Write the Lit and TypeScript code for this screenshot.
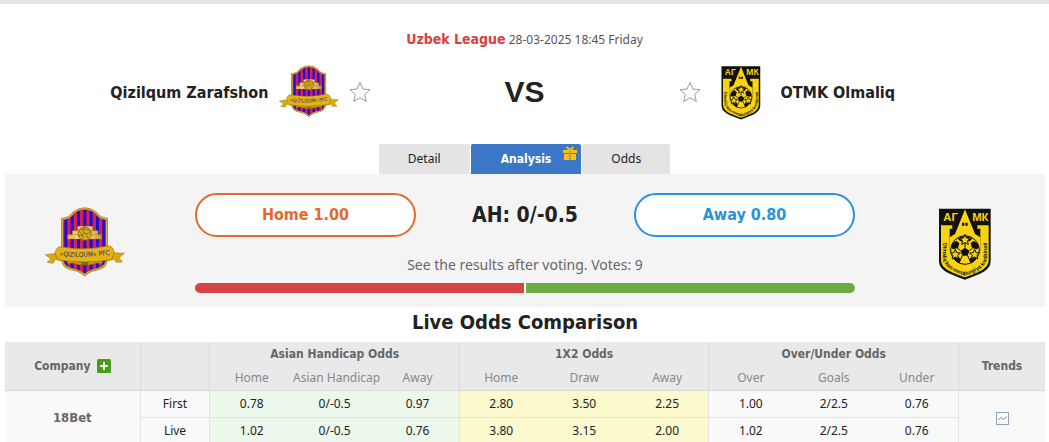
import { LitElement, html, svg, css } from "lit";
import { customElement, property } from "lit/decorators.js";
import { classMap } from "lit/directives/class-map.js";

type OddsRow = { label: string; ah: string[]; x12: string[]; ou: string[] };

const ODDS: { company: string; rows: OddsRow[] }[] = [
  {
    company: "18Bet",
    rows: [
      { label: "First", ah: ["0.78", "0/-0.5", "0.97"], x12: ["2.80", "3.50", "2.25"], ou: ["1.00", "2/2.5", "0.76"] },
      { label: "Live", ah: ["1.02", "0/-0.5", "0.76"], x12: ["3.80", "3.15", "2.00"], ou: ["1.02", "2/2.5", "0.76"] },
    ],
  },
];

const GROUPS = [
  { title: "Asian Handicap Odds", cols: ["Home", "Asian Handicap", "Away"] },
  { title: "1X2 Odds", cols: ["Home", "Draw", "Away"] },
  { title: "Over/Under Odds", cols: ["Over", "Goals", "Under"] },
];

const starPoints = (cx: number, cy: number, r: number, inner = 0.4) =>
  Array.from({ length: 10 }, (_, i) => {
    const rad = i % 2 ? r * inner : r;
    const a = (Math.PI / 5) * i - Math.PI / 2;
    return `${(cx + rad * Math.cos(a)).toFixed(1)},${(cy + rad * Math.sin(a)).toFixed(1)}`;
  }).join(" ");

@customElement("team-crest")
export class TeamCrest extends LitElement {
  @property() team = "home";

  static styles = css`
    :host { display: block; }
    svg { display: block; width: 100%; height: 100%; }
    .ribbon-text { font: 20px "DejaVu Sans Condensed", "Noto Sans", sans-serif; font-stretch: condensed; }
    .year { font: bold 9px "Liberation Sans", sans-serif; }
    .initials { font: bold 34px "Liberation Sans", Arial, sans-serif; }
    .ring { font: bold 16px "Liberation Sans", Arial, sans-serif; }
  `;

  private home() {
    const shield = "M82 57 Q104 56 116 38 Q132 26 149 26 Q166 26 182 38 Q194 56 215 57 L215 178 Q213 204 184 208 Q162 212 149 225 Q136 212 114 208 Q84 204 82 178 Z";
    return html`<svg viewBox="30 9 240 240" role="img" aria-label="Qizilqum Zarafshon">
      <defs>
        <clipPath id="s"><path d=${shield} /></clipPath>
        <linearGradient id="g" x1="0" x2="1"><stop offset="0" stop-color="#e2b53a" /><stop offset=".5" stop-color="#fff0a8" /><stop offset="1" stop-color="#c9921c" /></linearGradient>
        <path id="rb" d="M60 167 Q148 176 238 163" />
      </defs>
      <g clip-path="url(#s)">
        <rect x="80" y="20" width="140" height="210" fill="#d81f4e" />
        ${[88, 107, 126, 145, 164, 183, 202].map((x) => svg`<rect x=${x} y="20" width="9" height="210" fill="#1d10d6" />`)}
      </g>
      <path d=${shield} fill="none" stroke="#8f7423" stroke-width="7" />
      <path d=${shield} fill="none" stroke="#d8ac2c" stroke-width="4" />
      <path d="M128 79H173V92H189V104H200V117H98V104H112V92H128Z" fill="url(#g)" stroke="#b58a1f" />
      <path d="M112 92H189M98 104H200" stroke="#a87c1b" stroke-width="1.5" />
      <circle cx="149" cy="101" r="20" fill="#dda91f" stroke="#7b5c14" stroke-width="2.5" />
      <path d="M131 93Q149 106 143 120M134 88Q152 85 166 92M149 81Q140 92 148 100Q160 104 167 95M148 100Q140 108 131 107M155 103Q154 112 161 115" fill="none" stroke="#7b5c14" stroke-width="2.2" />
      <path d="M31 164L65 160L86 183L62 178L54 190L36 187L48 177Z M268 160L234 158L212 183L238 178L244 187L262 186L252 173Z" fill="#dba90e" stroke="#94700f" stroke-width="1.5" />
      <path d="M96 180Q149 190 204 180L200 191L186 189Q149 203 112 189L98 191Z" fill="#c9960b" stroke="#86640c" />
      <path d="M60 160Q64 134 88 142Q149 152 211 139Q233 132 238 158L229 179Q149 192 69 180Z" fill="#e4b310" stroke="#94700f" stroke-width="2" />
      <text class="ribbon-text" fill="#24306b" text-anchor="middle"><textPath href="#rb" startOffset="50%">«QIZILQUM» PFC</textPath></text>
      <text class="year" x="149" y="194" text-anchor="middle" fill="#3c2f10">2000</text>
    </svg>`;
  }

  private away() {
    return html`<svg viewBox="0 9 240 240" role="img" aria-label="OTMK Olmaliq">
      <defs>
        <path id="ring" d="M53 102V166C53 200 84 215 120 227C156 215 187 200 187 166V102" />
      </defs>
      <path d="M42 26H197V183C197 213 164 222 120 239C76 222 42 213 42 183Z" fill="#111" />
      <path d="M48 76H82V86H74L74 152Q76 188 120 202Q164 188 166 152V86H157V76H191V180C191 207 160 217 120 232C80 217 48 207 48 180Z" fill="#f7d313" />
      <path d="M120 28L150 102L166 112V160Q160 196 120 204Q80 196 74 160V112L90 102Z" fill="#f7d313" />
      <circle cx="120" cy="150" r="43" fill="#f7d313" stroke="#111" stroke-width="3" />
      <path d="M82 130L94 122L103 130L99 144L84 148L78 142Z M158 130L146 122L137 130L141 144L156 148L162 142Z M107 152L120 143L133 152L128 167H112Z M84 170L99 168L108 180L103 190Q90 184 84 170Z M156 170L141 168L132 180L137 190Q150 184 156 170Z M98 116Q120 100 142 116L134 124H106Z" fill="#111" />
      <path d="M112 167L106 180M128 167L134 180M107 152L97 144M133 152L143 144M120 143V124" stroke="#111" stroke-width="3" />
      <g fill="#f7d313" stroke="#111" stroke-width="3">
        <polygon points=${starPoints(120, 120, 17, 0.45)} />
        <polygon points=${starPoints(91, 164, 16, 0.45)} />
        <polygon points=${starPoints(149, 164, 16, 0.45)} />
      </g>
      <path d="M111 68H118V77H111ZM121 68H128V77H121Z" fill="#111" />
      <g fill="#f7d313" class="initials">
        <text x="77" y="62" text-anchor="middle">АГ</text>
        <text x="166" y="62" text-anchor="middle">МК</text>
      </g>
      <text class="ring" fill="#111" text-anchor="middle"><textPath href="#ring" startOffset="50%">Olmaliq kon-metallurgiya kombinati</textPath></text>
    </svg>`;
  }

  render() {
    return this.team === "home" ? this.home() : this.away();
  }
}

@customElement("app-root")
export class AppRoot extends LitElement {
  static styles = css`
    :host {
      display: block;
      background: #fff;
      color: #222;
      font: 12px/20px "Noto Sans", Tahoma, sans-serif;
    }
    * { box-sizing: border-box; }
    a { color: inherit; text-decoration: none; }
    button { font: inherit; cursor: pointer; padding: 0; border: 0; background: none; color: inherit; }
    .bold, h1, h2, th[scope="rowgroup"], .title {
      font-family: "DejaVu Sans Condensed", "DejaVu Sans", Tahoma, sans-serif;
      font-stretch: condensed;
      font-weight: bold;
    }
    header { border-top: 4px solid #e5e5e5; padding-top: 25px; }
    .meta { text-align: center; color: #555; }
    .league { font-size: 14px; color: #d9403f; }
    .match {
      display: grid;
      grid-template-columns: 1fr 308px 1fr;
      align-items: center;
      margin-top: 12px;
    }
    .side { display: flex; align-items: center; gap: 10px; }
    .side.home { justify-content: flex-end; }
    .side team-crest { width: 60px; height: 60px; }
    .name { font-size: 16px; line-height: 24px; padding-top: 2px; }
    .star { width: 22px; height: 24px; }
    .star svg { display: block; width: 22px; height: 24px; }
    .vs {
      text-align: center;
      font: bold 30px/36px "Liberation Sans", Arial, sans-serif;
    }
    nav { display: flex; justify-content: center; gap: 1px; margin-top: 22px; }
    .tab {
      position: relative;
      padding: 0 29px;
      line-height: 30px;
      background: #e4e4e4;
      border-radius: 2px 2px 0 0;
    }
    .tab.active { padding: 0 30px; background: #3c76c6; color: #fff; }
    .gift { position: absolute; top: 2px; right: 4px; width: 14px; height: 14px; }
    main { margin: 0 4px 0 5px; }
    .vote {
      display: grid;
      grid-template-columns: 1fr minmax(0, 660px) 1fr;
      background: #f4f4f4;
      padding: 19px 0 14px;
    }
    .vote > team-crest { width: 80px; height: 80px; margin: 10px 40px 0; }
    .vote > team-crest:last-child { justify-self: end; }
    .picks { display: grid; grid-template-columns: 221px 1fr 221px; align-items: center; }
    .pick {
      height: 44px;
      border: 2px solid;
      border-radius: 22px;
      background: #fff;
      font-size: 16px;
    }
    .pick.home { color: #e2692e; }
    .pick.away { color: #2793dc; }
    .line { text-align: center; font-size: 21px; }
    .hint { margin: 18px 0 8px; text-align: center; font-size: 14px; color: #666; }
    .bar { display: flex; gap: 2px; height: 10px; border-radius: 5px; overflow: hidden; background: #fff; }
    .bar div { flex: 1; }
    .bar .red { background: #d64343; }
    .bar .green { background: #70aa48; }
    h2 { margin: 0; font-size: 20px; line-height: 31px; padding-bottom: 4px; text-align: center; }
    table { width: 100%; table-layout: fixed; border-collapse: collapse; text-align: center; }
    th, td { padding: 0; white-space: nowrap; }
    .c-company { width: 13%; }
    .c-type { width: 6.7%; }
    .c-odds { width: 8%; }
    thead { background: #e9e9e9; color: #666; border-bottom: 1px solid #d9d9d9; }
    thead tr { height: 24px; }
    thead th { line-height: 24px; font-size: 12px; }
    .sub { font-weight: normal; color: #888; }
    .edge { border-left: 1px solid #d9d9d9; }
    tbody { background: #f9f9f9; color: #222; }
    tbody .edge { border-left-color: #e3e3e3; }
    tbody td { height: 27px; line-height: 26px; border-bottom: 1px solid #e3e3e3; }
    tbody th { color: #666; font-size: 13px; border-bottom: 1px solid #e3e3e3; }
    .ah { background: #ecf8ec; }
    .x12 { background: #fbf9cd; }
    .company { display: inline-flex; align-items: center; gap: 6px; }
    .add { width: 14px; height: 14px; }
    .add svg, .trend svg { display: block; }
    .trend { display: inline-block; vertical-align: middle; }
  `;

  private star(name: string) {
    return html`<button class="star" aria-label="Follow ${name}">
      <svg viewBox="0 0 22 24">
        <polygon points="11,2.5 13.9,9 21,9.7 15.7,14.5 17.3,21.5 11,17.8 4.7,21.5 6.3,14.5 1,9.7 8.1,9" fill="#fff" stroke="#999" stroke-linejoin="round" />
      </svg>
    </button>`;
  }

  private cells(values: string[], group: string) {
    return values.map((v, i) => html`<td class=${classMap({ [group]: true, edge: i === 0 })}>${v}</td>`);
  }

  render() {
    return html`
      <header>
        <div class="meta"><a class="league bold" href="#league">Uzbek League</a> 28-03-2025 18:45 Friday</div>
        <div class="match">
          <div class="side home">
            <a class="name bold" href="#home">Qizilqum Zarafshon</a>
            <team-crest team="home"></team-crest>
            ${this.star("Qizilqum Zarafshon")}
          </div>
          <div class="vs">VS</div>
          <div class="side">
            ${this.star("OTMK Olmaliq")}
            <team-crest team="away"></team-crest>
            <a class="name bold" href="#away">OTMK Olmaliq</a>
          </div>
        </div>
        <nav>
          <a class="tab" href="#detail">Detail</a>
          <a class="tab active bold" href="#analysis" aria-current="page">Analysis
            <svg class="gift" viewBox="0 0 14 14" aria-hidden="true">
              <path d="M0 4H6V7H0ZM8 4H14V7H8ZM1 8H6V14H1ZM8 8H13V14H8ZM6.4 4H7.6V14H6.4Z" fill="#fcbf12" />
              <path d="M7 4L3.5 1M7 4L10.5 1" stroke="#fcbf12" stroke-width="2" />
            </svg>
          </a>
          <a class="tab" href="#odds">Odds</a>
        </nav>
      </header>
      <main>
        <section class="vote">
          <team-crest team="home"></team-crest>
          <div>
            <div class="picks">
              <button class="pick home bold">Home 1.00</button>
              <div class="line bold">AH: 0/-0.5</div>
              <button class="pick away bold">Away 0.80</button>
            </div>
            <div class="hint">See the results after voting. Votes: 9</div>
            <div class="bar"><div class="red"></div><div class="green"></div></div>
          </div>
          <team-crest team="away"></team-crest>
        </section>
        <h2>Live Odds Comparison</h2>
        <table>
          <colgroup>
            <col class="c-company" /><col class="c-type" />
            ${Array.from({ length: 9 }, () => html`<col class="c-odds" />`)}
            <col />
          </colgroup>
          <thead>
            <tr>
              <th class="title" rowspan="2">
                <span class="company">Company
                  <button class="add" aria-label="Add company">
                    <svg width="14" height="14" viewBox="0 0 14 14"><rect width="14" height="14" rx="1.5" fill="#469f12" /><path d="M7 3V11M3 7H11" stroke="#fff" stroke-width="2" /></svg>
                  </button>
                </span>
              </th>
              <th class="edge" rowspan="2"></th>
              ${GROUPS.map((g) => html`<th class="title edge" colspan="3">${g.title}</th>`)}
              <th class="title edge" rowspan="2">Trends</th>
            </tr>
            <tr>
              ${GROUPS.map((g) => g.cols.map((c, i) => html`<th class=${classMap({ sub: true, edge: i === 0 })}>${c}</th>`))}
            </tr>
          </thead>
          <tbody>
            ${ODDS.map((o) => o.rows.map((r, i) => html`<tr>
              ${i === 0 ? html`<th scope="rowgroup" rowspan=${o.rows.length}>${o.company}</th>` : ""}
              <td class="edge">${r.label}</td>
              ${this.cells(r.ah, "ah")}${this.cells(r.x12, "x12")}${this.cells(r.ou, "ou")}
              ${i === 0
                ? html`<td class="edge" rowspan=${o.rows.length}>
                    <a class="trend" href="#trend" aria-label="Odds trend">
                      <svg width="13" height="13" viewBox="0 0 13 13"><rect x=".5" y=".5" width="12" height="12" fill="#fff" stroke="#8fa3b8" /><path d="M2 8L5 5.5L7.5 7.5L11 4.5" fill="none" stroke="#888" /></svg>
                    </a>
                  </td>`
                : ""}
            </tr>`))}
          </tbody>
        </table>
      </main>
    `;
  }
}
